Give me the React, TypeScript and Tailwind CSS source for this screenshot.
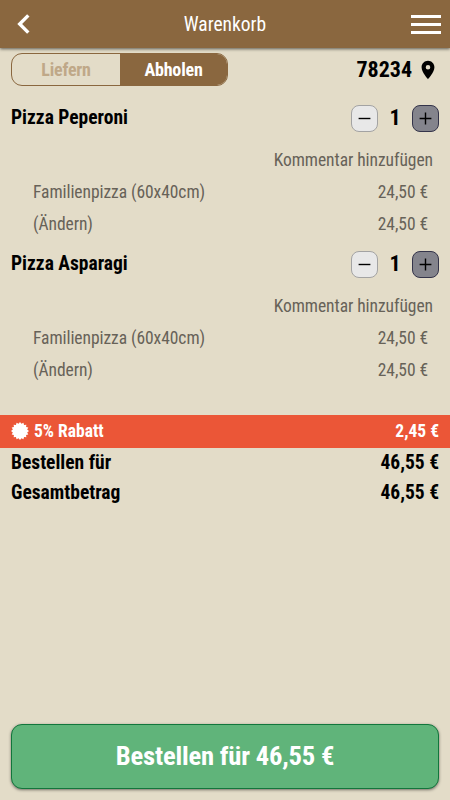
import { MdLocationOn } from "react-icons/md";

interface CartItem {
    name: string,
    amount: number,
    variant: string,
    price: string,
}

const items: CartItem[] = [
    { name: 'Pizza Peperoni', amount: 1, variant: 'Familienpizza (60x40cm)', price: '24,50 €' },
    { name: 'Pizza Asparagi', amount: 1, variant: 'Familienpizza (60x40cm)', price: '24,50 €' },
]

const starPoints = Array.from({ length: 32 }, (_, i) => {
    const r = i % 2 === 0 ? 9 : 7.3;
    const a = (i * Math.PI) / 16;
    return `${(9 + r * Math.sin(a)).toFixed(2)},${(9 - r * Math.cos(a)).toFixed(2)}`;
}).join(' ');

const Header = () => {
    return (
        <header className="relative flex h-12 shrink-0 items-center justify-between bg-[#8a673f] pl-[17px] pr-[9px] text-white shadow-[0_1px_3px_rgba(0,0,0,0.6)]">
            <button aria-label="Zurück" className="w-[22px]">
                <svg width="13" height="20" viewBox="0 0 13 20" fill="none" stroke="currentColor" strokeWidth="3.4">
                    <path d="M11.3 1.4 L2.7 10 L11.3 18.6" />
                </svg>
            </button>
            <h1 className="pt-px text-[19.5px] leading-none">Warenkorb</h1>
            <button aria-label="Menü" className="flex w-[30px] flex-col gap-[5px]">
                <span className="h-[3px] w-full bg-white"></span>
                <span className="h-[3px] w-full bg-white"></span>
                <span className="h-[3px] w-full bg-white"></span>
            </button>
        </header>
    )
}

const CartEntry = ({ item }: { item: CartItem }) => {
    return (
        <li className="h-[146px]">
            <div className="flex h-8 items-center justify-between">
                <h2 className="pb-px text-[19.5px] font-bold leading-none">{item.name}</h2>
                <div className="flex items-center">
                    <button aria-label="Weniger" className="flex size-[27px] items-center justify-center rounded-lg border border-[#a3a3a3] bg-[#e8e8e8]">
                        <svg width="13" height="13" viewBox="0 0 13 13" stroke="black" strokeWidth="1.4"><path d="M0.6 6.5H12.4" /></svg>
                    </button>
                    <span className="w-[34px] text-center text-[22px] font-bold leading-none">{item.amount}</span>
                    <button aria-label="Mehr" className="flex size-[27px] items-center justify-center rounded-lg border border-[#34344a] bg-[#84848c]">
                        <svg width="13" height="13" viewBox="0 0 13 13" stroke="black" strokeWidth="1.4"><path d="M0.6 6.5H12.4M6.5 0.6V12.4" /></svg>
                    </button>
                </div>
            </div>
            <div className="mt-[10px] text-[17.5px] tracking-[-0.06px] text-[#676258]">
                <p className="h-8 pr-[6px] text-right leading-8">Kommentar hinzufügen</p>
                <div className="flex h-8 justify-between pl-[22px] pr-[11px] leading-8">
                    <span>{item.variant}</span>
                    <span>{item.price}</span>
                </div>
                <div className="flex h-8 justify-between pl-[22px] pr-[11px] leading-8">
                    <span>(Ändern)</span>
                    <span>{item.price}</span>
                </div>
            </div>
        </li>
    )
}

const App = () => {
    return (
        <div className="flex h-[800px] w-[450px] flex-col overflow-hidden bg-[#e3dcc8] font-['Roboto_Condensed','Roboto',sans-serif] text-black font-stretch-condensed">
            <Header />
            <div className="mt-[5px] flex h-[33px] shrink-0 items-center justify-between px-[11px]">
                <div className="flex h-[33px] w-[217px] overflow-hidden rounded-[11px] border border-[#8a673f] text-[18px] font-bold tracking-[-0.2px]">
                    <button className="w-[108px] text-[#bfa888]">Liefern</button>
                    <button className="grow bg-[#8a673f] text-white">Abholen</button>
                </div>
                <div className="flex items-center text-[22px] font-bold leading-none">
                    <span>78234</span>
                    <MdLocationOn size={22} className="ml-[5px]" />
                </div>
            </div>
            <ul className="mt-4 px-[11px]">
                {items.map((item) => <CartEntry key={item.name} item={item} />)}
            </ul>
            <div className="mt-[21px] flex h-[33px] shrink-0 items-center justify-between bg-[#eb5637] px-[11px] text-[17.5px] font-bold text-white">
                <div className="flex items-center gap-[5px]">
                    <svg width="18" height="18" viewBox="0 0 18 18" fill="white" className="mb-px"><polygon points={starPoints} /></svg>
                    <span>5% Rabatt</span>
                </div>
                <span>2,45 €</span>
            </div>
            <div className="px-[11px] text-[19.5px] font-bold leading-[29.5px]">
                <div className="flex justify-between">
                    <span>Bestellen für</span>
                    <span>46,55 €</span>
                </div>
                <div className="flex justify-between">
                    <span>Gesamtbetrag</span>
                    <span>46,55 €</span>
                </div>
            </div>
            <button className="mx-[11px] mb-[11px] mt-auto h-[65px] shrink-0 rounded-[11px] border border-[#12763c] bg-[#60b47a] pb-[2px] text-[26.6px] font-bold tracking-[-0.2px] text-white shadow-[0_1px_3px_rgba(0,0,0,0.5)]">
                Bestellen für 46,55 €
            </button>
        </div>
    )
}

export default App
